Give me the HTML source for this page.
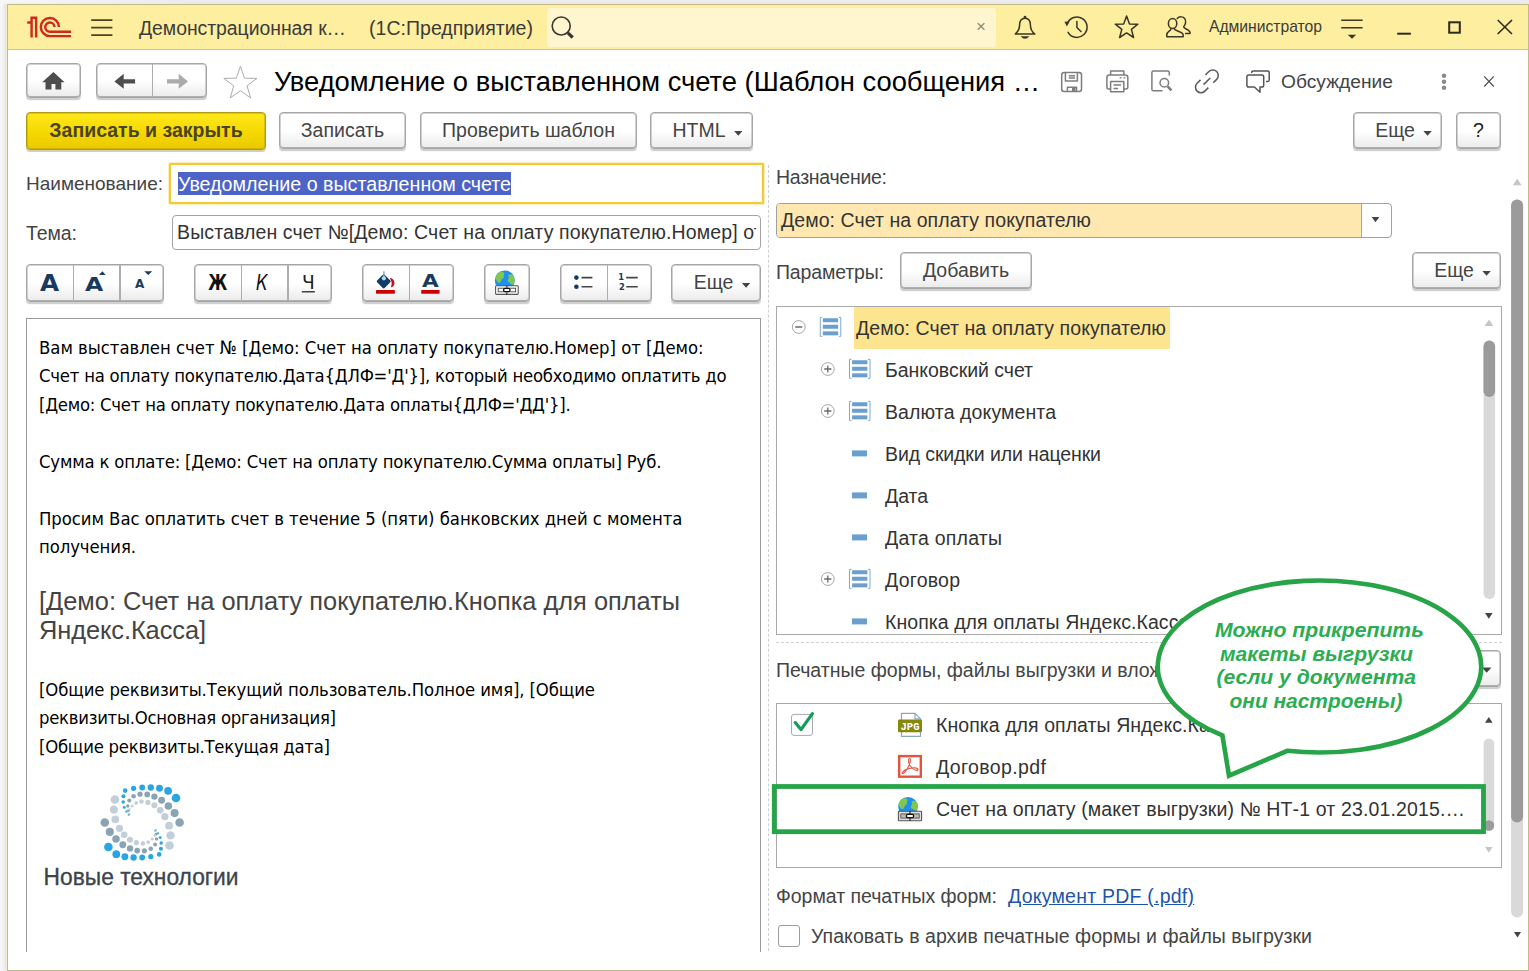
<!DOCTYPE html>
<html lang="ru"><head><meta charset="utf-8"><title>Уведомление о выставленном счете</title>
<style>
*{box-sizing:border-box;margin:0;padding:0}
html,body{width:1529px;height:971px;overflow:hidden;background:#f6f6f6}
body{position:relative;font-family:"Liberation Sans",Arial,sans-serif;font-size:19.5px;color:#3a3a3a}
.abs,.t,.btn,.grp,svg.i{position:absolute}
.t{white-space:nowrap;line-height:24px;height:24px}
#win{position:absolute;left:7px;top:4px;width:1522px;height:967px;background:#fff;border:1px solid #c3b98a;box-shadow:-1px 0 0 #f3edd2,-3px 0 2px rgba(225,223,228,.8)}
#bar{position:absolute;left:8px;top:5px;width:1520px;height:45px;background:#fdeea0;border-bottom:1px solid #d2c37c}
#search{position:absolute;left:547px;top:8px;width:449px;height:39.4px;background:#fff6d0;border-radius:3px}
.btn{border:1px solid #a6a6a6;border-radius:4px;background:linear-gradient(#ffffff 50%,#ebebeb);box-shadow:inset 0 -1px 0 rgba(166,166,166,.75),inset 0 0 0 1px rgba(166,166,166,.5),0 2px 0 #cfcfcf,0 3px 0 rgba(0,0,0,.03);text-align:center;white-space:nowrap;color:#444;line-height:34px;height:37px}
.btn.y{background:linear-gradient(#ffe81c,#f5d800 55%,#ebc900);border:1px solid #b09c12;box-shadow:inset 0 0 0 1px rgba(176,156,18,.45),0 2px 0 #d5d0b0;font-weight:bold;color:#4a4426}
.grp{border:1px solid #a6a6a6;border-radius:4px;background:linear-gradient(#ffffff 50%,#ebebeb);box-shadow:inset 0 -1px 0 rgba(166,166,166,.75),inset 0 0 0 1px rgba(166,166,166,.5),0 2px 0 #cfcfcf,0 3px 0 rgba(0,0,0,.03);height:37px}
.grp i{position:absolute;top:0;width:1.4px;height:35px;background:#adadad}
.dd{display:inline-block;width:8.4px;height:4.8px;background:#444;clip-path:polygon(0 0,100% 0,50% 100%);vertical-align:middle;margin-left:8.5px;position:relative;top:1.5px}
.btn.m{padding-left:12px}
.ed{font-family:"DejaVu Sans Condensed","DejaVu Sans","Liberation Sans",sans-serif;font-size:18.35px;color:#000;line-height:28.5px;height:28.5px}
.big{font-size:25.4px;color:#444;line-height:29px;height:29px}
.tr{font-size:19.5px;color:#333}
</style></head><body>
<div class="abs" style="left:0;top:0;width:1529px;height:4px;background:linear-gradient(90deg,#f7f7f7,#ececec 12%)"></div>
<div id="win"></div>
<div id="bar"></div>
<div id="search"></div>

<!-- title bar texts -->
<div class="t" style="left:139px;top:16px;color:#3b3b3b;font-size:19.4px;letter-spacing:-0.032px">Демонстрационная к…</div>
<div class="t" style="left:369px;top:16px;color:#3b3b3b;font-size:19.5px;letter-spacing:0.032px">(1С:Предприятие)</div>
<div class="t" style="left:1209px;top:15px;color:#3b3b3b;font-size:15.7px;letter-spacing:-0.016px">Администратор</div>
<div class="t" style="left:976px;top:15px;color:#8d8871;font-size:17px">×</div>

<!-- nav row -->
<div class="btn" style="left:26px;top:63px;width:55px;height:35px"></div>
<div class="grp" style="left:96px;top:63px;width:111px;height:35px"><i style="left:55px;height:33px"></i></div>
<div class="t" style="left:274px;top:66.3px;font-size:27.35px;color:#000;line-height:32px;height:32px;letter-spacing:-0.008px">Уведомление о выставленном счете (Шаблон сообщения …</div>
<div class="t" style="left:1281px;top:70px;font-size:19.2px;color:#444;letter-spacing:0.023px">Обсуждение</div>

<!-- command bar -->
<div class="btn y" style="left:26px;top:112px;width:240px;height:38px;line-height:34px">Записать и закрыть</div>
<div class="btn" style="left:279px;top:112px;width:127px">Записать</div>
<div class="btn" style="left:420px;top:112px;width:217px">Проверить шаблон</div>
<div class="btn m" style="left:650px;top:112px;width:103px">HTML<span class="dd"></span></div>
<div class="btn m" style="left:1353px;top:112px;width:89px">Еще<span class="dd"></span></div>
<div class="btn" style="left:1456px;top:112px;width:45px;color:#222">?</div>

<!-- left column fields -->
<div class="t" style="left:26px;top:172px;font-size:19px;color:#444;letter-spacing:0.000px">Наименование:</div>
<div class="abs" style="left:169px;top:163px;width:595px;height:41px;border:2px solid #f2cb3d;border-radius:1.5px;box-shadow:0 0 0 1px #fbeeba;background:#fff"></div>
<div class="abs" style="left:178px;top:172px;width:333px;height:23px;background:#4d64c6"></div>
<div class="t" style="left:178px;top:172px;font-size:19.66px;color:#fff;letter-spacing:-0.001px">Уведомление о выставленном счете</div>
<div class="t" style="left:26px;top:221px;color:#444;letter-spacing:-0.086px">Тема:</div>
<div class="abs" style="left:172px;top:215px;width:589px;height:35px;border:1px solid #a3a3a3;border-radius:4px;background:#fff"></div><div class="abs" style="left:173px;top:216px;width:582.5px;height:33px;overflow:hidden"><div class="t" style="left:4px;top:4.3px;color:#333;letter-spacing:0.120px">Выставлен счет №[Демо: Счет на оплату покупателю.Номер] от [Демо</div></div>

<!-- editor toolbar -->
<div class="grp" style="left:26px;top:264px;width:138px;height:37.7px"><i style="left:45.6px"></i><i style="left:92.2px"></i></div>
<div class="grp" style="left:194px;top:264px;width:138px;height:37.7px"><i style="left:45.6px"></i><i style="left:92.2px"></i></div>
<div class="grp" style="left:362px;top:264px;width:92px;height:37.7px"><i style="left:45.7px"></i></div>
<div class="grp" style="left:484px;top:264px;width:46px;height:37.7px"></div>
<div class="grp" style="left:560px;top:264px;width:92px;height:37.7px"><i style="left:45.8px"></i></div>
<div class="btn m" style="left:671px;top:264px;width:90px;height:37.7px;line-height:35px">Еще<span class="dd"></span></div>

<!-- editor -->
<div class="abs" style="left:26px;top:318px;width:735px;height:634px;border:1px solid #999;border-bottom:none;background:#fff"></div>
<div class="t ed" style="left:39px;top:334px;letter-spacing:-0.015px">Вам выставлен счет № [Демо: Счет на оплату покупателю.Номер] от [Демо:</div>
<div class="t ed" style="left:39px;top:362px;letter-spacing:-0.227px">Счет на оплату покупателю.Дата{ДЛФ='Д'}], который необходимо оплатить до</div>
<div class="t ed" style="left:39px;top:391px;letter-spacing:-0.250px">[Демо: Счет на оплату покупателю.Дата оплаты{ДЛФ='ДД'}].</div>
<div class="t ed" style="left:39px;top:448px;letter-spacing:-0.173px">Сумма к оплате: [Демо: Счет на оплату покупателю.Сумма оплаты] Руб.</div>
<div class="t ed" style="left:39px;top:505px;letter-spacing:-0.052px">Просим Вас оплатить счет в течение 5 (пяти) банковских дней с момента</div>
<div class="t ed" style="left:39px;top:533px;letter-spacing:-0.089px">получения.</div>
<div class="t big" style="left:39px;top:587px;letter-spacing:-0.006px">[Демо: Счет на оплату покупателю.Кнопка для оплаты</div>
<div class="t big" style="left:39px;top:616px;letter-spacing:-0.077px">Яндекс.Касса]</div>
<div class="t ed" style="left:39px;top:676px;letter-spacing:-0.116px">[Общие реквизиты.Текущий пользователь.Полное имя], [Общие</div>
<div class="t ed" style="left:39px;top:704px;letter-spacing:-0.276px">реквизиты.Основная организация]</div>
<div class="t ed" style="left:39px;top:733px;letter-spacing:-0.248px">[Общие реквизиты.Текущая дата]</div>

<div class="abs" style="left:768px;top:165px;width:0;height:786px;border-left:1px dashed #cfcfcf"></div>
<!-- right column -->
<div class="t" style="left:776px;top:165.3px;color:#444;letter-spacing:-0.277px">Назначение:</div>
<div class="abs" style="left:776px;top:203px;width:616px;height:35px;border:1px solid #a0a0a0;border-radius:4px;background:#fff;overflow:hidden"><div class="abs" style="left:0;top:0;width:585px;height:33px;background:#fee8b0;border-right:1px solid #a6a6a6"></div><div class="t" style="left:4px;top:3.5px;color:#333;letter-spacing:0.065px">Демо: Счет на оплату покупателю</div></div>

<div class="t" style="left:776px;top:260px;color:#444;letter-spacing:-0.153px">Параметры:</div>
<div class="btn" style="left:900px;top:252px;width:132px">Добавить</div>
<div class="btn m" style="left:1412px;top:252px;width:89px">Еще<span class="dd"></span></div>

<!-- tree -->
<div class="abs" id="tree" style="left:776px;top:306px;width:726px;height:329px;border:1px solid #a9a9a9;background:#fff;overflow:hidden"></div>
<div class="abs" style="left:854px;top:307px;width:316px;height:42px;background:#fde48e"></div>
<div class="t tr" style="left:856px;top:316px;letter-spacing:0.065px">Демо: Счет на оплату покупателю</div>
<div class="t tr" style="left:885px;top:358px;letter-spacing:-0.032px">Банковский счет</div>
<div class="t tr" style="left:885px;top:400px;letter-spacing:0.101px">Валюта документа</div>
<div class="t tr" style="left:885px;top:442px;letter-spacing:-0.109px">Вид скидки или наценки</div>
<div class="t tr" style="left:885px;top:484px">Дата</div>
<div class="t tr" style="left:885px;top:526px;letter-spacing:0.225px">Дата оплаты</div>
<div class="t tr" style="left:885px;top:568px;letter-spacing:0.227px">Договор</div>
<div class="abs" style="left:885px;top:610px;width:500px;height:24px;overflow:hidden"><div class="t tr" style="left:0;top:0;letter-spacing:.06px">Кнопка для оплаты Яндекс.Касса</div></div>

<div class="abs" style="left:776px;top:642px;width:726px;height:0;border-top:1px dashed #cfcfcf"></div>
<div class="t" style="left:776px;top:658px;color:#444">Печатные формы, файлы выгрузки и вложения</div>
<div class="btn" style="left:1412px;top:650px;width:89px"></div>

<!-- list -->
<div class="abs" style="left:776px;top:703px;width:726px;height:165px;border:1px solid #a9a9a9;background:#fff"></div>
<div class="t tr" style="left:936px;top:713px;letter-spacing:.06px">Кнопка для оплаты Яндекс.Касса.jpg</div>
<div class="t tr" style="left:936px;top:755px;letter-spacing:0.384px">Договор.pdf</div>
<div class="t tr" style="left:936px;top:797px;letter-spacing:0.138px">Счет на оплату (макет выгрузки) № НТ-1 от 23.01.2015.…</div>

<div class="t" style="left:776px;top:884px;color:#444;letter-spacing:-0.023px">Формат печатных форм:</div>
<div class="t" style="left:1008px;top:884px;color:#1d55a8;text-decoration:underline;letter-spacing:0.230px">Документ PDF (.pdf)</div>
<div class="abs" style="left:778px;top:925px;width:22px;height:22px;border:1px solid #9c9c9c;border-radius:3px;background:#fff"></div>
<div class="t" style="left:811px;top:924px;color:#444;letter-spacing:0.057px">Упаковать в архив печатные формы и файлы выгрузки</div>

<!-- icons -->
<svg class="i" style="left:0;top:0" width="1529" height="971" viewBox="0 0 1529 971" fill="none">
 <!-- 1C logo -->
 <g stroke="#cf2a1c" stroke-width="2.45" fill="none">
  <path d="M31.6 37.5 V17.7 H36.15 V37.5 M27.2 22.4 H31.6"/>
  <path d="M58.91 27.06 A9.05 9.05 0 1 0 49.86 36.11 H71.1"/>
  <path d="M54.46 27.06 A4.6 4.6 0 1 0 49.86 31.66 H71.1"/>
 </g>
 <!-- hamburger -->
 <path d="M91.2 20.2 H112.4 M91.2 27.6 H112.4 M91.2 35.2 H112.4" stroke="#4a4220" stroke-width="1.8"/>
 <!-- magnifier -->
 <circle cx="561.2" cy="26" r="9" stroke="#3a3630" stroke-width="1.6"/>
 <path d="M567.9 32.9 L572.7 37.5" stroke="#3a3630" stroke-width="3.2"/>
 <!-- bell -->
 <g stroke="#3a3628" stroke-width="1.5" stroke-linejoin="round" stroke-linecap="round">
  <path d="M1015.2 34.1 C1019 31 1019.6 28.6 1019.6 25 C1019.6 20.4 1021.8 18.2 1025 18.2 C1028.2 18.2 1030.4 20.4 1030.4 25 C1030.4 28.6 1031 31 1034.8 34.1 Z"/>
  <circle cx="1025" cy="17.2" r="0.7"/>
  <path d="M1020.6 36.3 H1029.4 Q1025 41.4 1020.6 36.3 Z" fill="#3a3628" stroke="none"/>
  <!-- history -->
  <path d="M1067.3 23.7 A10.2 10.2 0 1 1 1068.07 32.3"/>
  <path d="M1076.9 21.5 V27.5 L1081 31.5"/>
  <path d="M1064.4 21.8 L1069.6 21.5 L1066.9 26.4 Z" fill="#3a3628" stroke="none"/>
  <!-- star -->
  <polygon points="1126.6,16.0 1129.5,23.9 1137.9,24.2 1131.4,29.4 1133.6,37.5 1126.6,32.9 1119.6,37.5 1121.8,29.4 1115.3,24.2 1123.7,23.9"/>
  <!-- users -->
  <ellipse cx="1172.6" cy="23.6" rx="4.2" ry="5"/>
  <path d="M1171 28.6 C1171 31.5 1166.8 31 1166.8 35 V36.7 H1183.2 V35 C1183.2 31 1174.2 31.5 1174.2 28.6"/>
  <path d="M1177.2 18.4 C1178.2 17.2 1179.8 16.6 1181.4 16.8 C1184.4 17.1 1186 19.6 1185.6 22.6 C1185.3 24.6 1184.5 25.8 1183.6 26.8 C1184.4 29.4 1190 29.4 1190 32.6 V33.6 H1185.6"/>
 </g>
 <!-- filter lines -->
 <path d="M1341.2 20.3 H1362.6 M1341.2 27.8 H1362.6" stroke="#3a3628" stroke-width="1.6"/>
 <path d="M1347.7 34.7 H1356.2 L1352 38.8 Z" fill="#3a3628"/>
 <!-- window controls -->
 <path d="M1397.2 33.7 H1410.9" stroke="#2e2a1c" stroke-width="2"/>
 <rect x="1449.2" y="22.3" width="10.6" height="10.4" stroke="#2e2a1c" stroke-width="2"/>
 <path d="M1497.7 20 L1512 34 M1512 20 L1497.7 34" stroke="#2e2a1c" stroke-width="1.6"/>

 <!-- home / back / forward -->
 <path d="M53.4 72 L64.6 82.2 H61.3 V89.5 H55.4 V83.9 H51.5 V89.5 H45.5 V82.2 H42.2 Z" fill="#4d4d4d"/>
 <path d="M114.4 81.4 L123.7 73.7 V79.3 H135.1 V83.6 H123.7 V88.7 Z" fill="#4d4d4d"/>
 <path d="M188 81.4 L178.7 73.7 V79.3 H167 V83.6 H178.7 V88.7 Z" fill="#ababab"/>
 <polygon points="240.4,66.3 244.5,78.2 257.0,78.4 247.0,85.9 250.7,98.0 240.4,90.7 230.1,98.0 233.8,85.9 223.8,78.4 236.3,78.2" stroke="#adadad" stroke-width="1"/>

 <!-- save -->
 <g stroke="#7d7d7d" stroke-width="1.5" stroke-linejoin="round">
  <rect x="1061.7" y="72.5" width="19.8" height="19" rx="2.5"/>
  <path d="M1065.4 72.5 V81 H1077.4 V72.5 M1068.8 75.7 H1075.1 M1068.8 78.1 H1075.1" />
  <path d="M1067.4 91.5 V87.2 H1076.6 V91.5"/>
  <rect x="1072" y="87.8" width="3.6" height="3.7" fill="#7d7d7d" stroke="none"/>
  <!-- print -->
  <path d="M1110.6 75 V70.9 H1123.8 V75"/>
  <path d="M1110.6 89 H1108.6 Q1106.9 89 1106.9 87 V77.5 Q1106.9 75 1109.4 75 H1125.2 Q1127.8 75 1127.8 77.5 V87 Q1127.8 89 1126 89 H1123.8"/>
  <rect x="1110.6" y="81.4" width="13.2" height="10.3" fill="#fff"/>
  <path d="M1113.5 85.1 H1121 M1113.5 88.4 H1118" />
  <path d="M1119.6 77.9 H1121.6 M1123.4 77.9 H1125.4" stroke-width="1.3"/>
  <!-- preview -->
  <path d="M1169.3 75.5 V72.4 Q1169.3 70.9 1167.6 70.9 H1153.4 Q1151.9 70.9 1151.9 72.4 V89.2 Q1151.9 90.8 1153.4 90.8 H1162.5"/>
 </g>
 <circle cx="1164.3" cy="82.8" r="4.3" stroke="#7d7d7d" stroke-width="1.5"/>
 <path d="M1167.6 86.3 L1171.4 90.4" stroke="#7d7d7d" stroke-width="2.6"/>
 <!-- link -->
 <g stroke="#5c5c5c" stroke-width="1.55" stroke-linecap="butt">
  <path d="M1205.44 74.99 L1208.87 71.56 A5.5 5.5 0 0 1 1216.65 79.34 L1213.22 82.77"/>
  <path d="M1208.32 87.67 L1204.89 91.1 A5.5 5.5 0 0 1 1197.11 83.32 L1200.54 79.89"/>
  <path d="M1203.48 84.66 L1210.31 78"/>
 </g>
 <!-- chat -->
 <g stroke="#555" stroke-width="1.5" stroke-linejoin="round">
  <path d="M1251.6 73 V72.6 Q1251.6 70.9 1253.4 70.9 H1267.4 Q1269.2 70.9 1269.2 72.6 V80 Q1269.2 81.6 1267.4 81.6 H1266"/>
  <path d="M1248.7 75 H1261.9 Q1263.7 75 1263.7 76.8 V85.2 Q1263.7 87 1261.9 87 H1260 V92.2 L1254.4 87 H1248.7 Q1246.9 87 1246.9 85.2 V76.8 Q1246.9 75 1248.7 75 Z"/>
 </g>
 <!-- dots & close -->
 <circle cx="1444" cy="75.7" r="2.3" fill="#8a8a8a"/><circle cx="1444" cy="81.7" r="2.3" fill="#8a8a8a"/><circle cx="1444" cy="87.7" r="2.3" fill="#8a8a8a"/>
 <path d="M1484.2 76.4 L1493.8 86.5 M1493.8 76.4 L1484.2 86.5" stroke="#555" stroke-width="1.3"/>


 <!-- fill bucket -->
 <rect x="-5.3" y="-5.3" width="10.6" height="10.6" rx="1.3" transform="translate(383.7 281.4) rotate(45)" fill="#103d67"/>
 <path d="M383.9 271.2 V277.5" stroke="#8fa4b8" stroke-width="1.5"/>
 <circle cx="383.9" cy="278.3" r="2.1" fill="#b9d8f2"/>
 <path d="M389.9 278.1 C392.3 278.3 394 279.6 394.4 282.2 C394.7 284.6 393.6 286.4 391.7 287.2 C391 287.4 390.9 286.9 391.2 286 C391.9 283.8 391.9 281.8 390.9 280.4 Z" fill="#cc0a12"/>
 <rect x="376" y="290" width="18.9" height="3.7" rx="0.6" fill="#cc0000"/>
 <rect x="421.2" y="290" width="18.4" height="3.7" rx="0.6" fill="#cc0000"/>
 <!-- globe button -->
 <g id="globe">
  <circle cx="504.8" cy="280.4" r="10" fill="#1e90f0"/>
  <path d="M498 273.2 C500.5 271.2 503.5 271.6 504.5 273.4 C503 275.4 505 277 502.6 278.6 C500.6 279.6 501.6 282.4 499.4 283 C497.4 282.6 496 280 495.2 278.6 C495.6 276.4 496.6 274.6 498 273.2 Z" fill="#7ec850"/>
  <path d="M508.6 275 C510.6 273.6 513 274.6 514.2 277 C515 279.4 514.6 282.4 513.2 284.6 C511.2 285 510.6 283 509 282.4 C507 281.4 507.4 279.4 508.6 278.4 C509.6 277.4 507.6 276.2 508.6 275 Z" fill="#7ec850"/>
  <rect x="495.6" y="285.8" width="22.6" height="8.6" rx="0.8" fill="#fff" stroke="#555" stroke-width="1.1"/>
  <rect x="498.2" y="288.2" width="17.4" height="3.6" fill="#fff" stroke="#444" stroke-width="0.9"/>
  <rect x="503.6" y="288.4" width="6.4" height="3.2" rx="1.4" fill="#fff" stroke="#111" stroke-width="1.3"/>
  <path d="M506.8 285.8 V287.6 M506.8 292.4 V294.4" stroke="#222" stroke-width="1.2"/>
 </g>
 <!-- bullets -->
 <circle cx="576.4" cy="277.6" r="2.3" fill="#173a5e"/><circle cx="576.4" cy="286.8" r="2.3" fill="#173a5e"/>
 <path d="M581.5 277.6 H592.4 M581.5 286.8 H592.4 M626.2 277.6 H637.7 M626.2 286.8 H637.7" stroke="#444" stroke-width="1.6"/>
 <!-- size triangles -->
 <path d="M99 274.9 H105.7 L102.35 271.2 Z" fill="#173a5e"/>
 <path d="M144.3 271.2 H152.2 L148.25 274.9 Z" fill="#173a5e"/>
 <!-- Ч underline -->
 <path d="M301.8 291.8 H314.8" stroke="#222" stroke-width="1.3"/>

 <!-- tree expanders -->
 <g stroke="#a6a6a6" stroke-width="1" fill="#fff">
  <circle cx="798.75" cy="327" r="6.4"/><circle cx="827.8" cy="369" r="6.4"/><circle cx="827.8" cy="411" r="6.4"/><circle cx="827.8" cy="579" r="6.4"/>
 </g>
 <path d="M795.2 327 H802.3 M824.2 369 H831.4 M827.8 365.4 V372.6 M824.2 411 H831.4 M827.8 407.4 V414.6 M824.2 579 H831.4 M827.8 575.4 V582.6" stroke="#6a6a6a" stroke-width="1.3"/>
 <!-- tree icons -->
 <defs>
  <g id="rec">
   <path d="M2.5 0.5 H0.5 V19.5 H2.5 M19 0.5 H21 V19.5 H19" stroke="#7fa9d0" stroke-width="1" fill="none"/>
   <rect x="3.1" y="1.4" width="15.3" height="4" fill="#6a9fd0"/><rect x="3.1" y="7.9" width="15.3" height="4" fill="#6a9fd0"/><rect x="3.1" y="14.5" width="15.3" height="4" fill="#6a9fd0"/>
  </g>
  <rect id="fld" width="15" height="6" fill="#6a9fd0"/>
 </defs>
 <use href="#rec" x="819.75" y="316.85"/>
 <use href="#rec" x="849" y="358.85"/><use href="#rec" x="849" y="400.85"/><use href="#rec" x="849" y="568.85"/>
 <use href="#fld" x="852" y="450.4"/><use href="#fld" x="852" y="492.4"/><use href="#fld" x="852" y="534.4"/><use href="#fld" x="852" y="618.4"/>

 <!-- list: checkbox -->
 <rect x="791.5" y="714.4" width="21" height="21" rx="2.5" fill="#fff" stroke="#a9a9a9" stroke-width="1"/>
 <path d="M795.2 722.6 L801 729.6 L812.4 713.6" stroke="#0f9d58" stroke-width="3.2" stroke-linecap="round" stroke-linejoin="round"/>
 <!-- jpg icon -->
 <path d="M901.5 713.3 H915 L920.5 718.8 V736.3 H901.5 Z" fill="#fff" stroke="#8aa5bd" stroke-width="1.2" stroke-linejoin="round"/>
 <path d="M915 713.3 V718.8 H920.5" stroke="#8aa5bd" stroke-width="1.2"/>
 <rect x="898" y="719.5" width="24" height="12.7" rx="1.2" fill="#87870a"/>
 <text x="910" y="730" font-family="Liberation Mono, DejaVu Sans Mono, monospace" font-weight="bold" font-size="10.5" fill="#fff" text-anchor="middle" textLength="19" lengthAdjust="spacingAndGlyphs">JPG</text>
 <!-- pdf icon -->
 <rect x="899.2" y="756.1" width="21.6" height="20.6" fill="#fff" stroke="#e2543e" stroke-width="2.4"/>
 <path d="M902.3 772.8 C903.3 770.6 907.6 768.6 911.8 768 C915.4 767.4 918.4 768.4 918 769.8 C917.6 771 914.6 770.2 912.2 768.2 C909.8 766 908.2 762.4 908.6 759.6 C908.9 758 910.4 758.2 910.4 760 C910.4 763.4 907.4 769.4 904.6 772.4 C903.4 773.8 901.8 774 902.3 772.8 Z" stroke="#e2543e" stroke-width="1.1"/>
 <!-- list globe -->
 <g transform="translate(403.2 526.3)">
  <circle cx="504.8" cy="280.4" r="9.8" fill="#1e90f0"/>
  <path d="M498 273.2 C500.5 271.2 503.5 271.6 504.5 273.4 C503 275.4 505 277 502.6 278.6 C500.6 279.6 501.6 282.4 499.4 283 C497.4 282.6 496 280 495.2 278.6 C495.6 276.4 496.6 274.6 498 273.2 Z" fill="#7ec850"/>
  <path d="M508.6 275 C510.6 273.6 513 274.6 514.2 277 C515 279.4 514.6 282.4 513.2 284.6 C511.2 285 510.6 283 509 282.4 C507 281.4 507.4 279.4 508.6 278.4 C509.6 277.4 507.6 276.2 508.6 275 Z" fill="#7ec850"/>
  <rect x="495.2" y="285" width="23.2" height="9.4" rx="0.8" fill="#ddd" stroke="#555" stroke-width="1.1"/>
  <rect x="497.6" y="287.6" width="18.4" height="4.2" fill="#bbb" stroke="#555" stroke-width="0.9"/>
  <rect x="503.2" y="288" width="7.2" height="3.4" rx="1.4" fill="#fff" stroke="#111" stroke-width="1.3"/>
  <path d="M506.8 285 V287.6 M506.8 292 V294.4" stroke="#222" stroke-width="1.2"/>
 </g>

 <!-- scrollbars -->
 <path d="M1484.6 326 H1493.4 L1489 319.6 Z" fill="#c6c6c6"/>
 <rect x="1483.5" y="340.5" width="11.6" height="258.5" rx="5.8" fill="#d9d9d9"/>
 <rect x="1483.5" y="340.5" width="11.6" height="56.5" rx="5.8" fill="#9b9b9b"/>
 <path d="M1485 613 H1492.6 L1488.8 618.8 Z" fill="#444"/>
 <path d="M1485 722.8 H1492.6 L1488.8 717 Z" fill="#444"/>
 <rect x="1483.6" y="738.5" width="10.6" height="92.4" rx="5.3" fill="#d9d9d9"/>
 <circle cx="1488.9" cy="825.5" r="5.3" fill="#9b9b9b"/>
 <path d="M1485 847 H1492.6 L1488.8 852.8 Z" fill="#c6c6c6"/>
 <path d="M1512.8 185.2 H1521.6 L1517.2 178.8 Z" fill="#c6c6c6"/>
 <rect x="1511.1" y="199.6" width="12" height="718" rx="6" fill="#d9d9d9"/>
 <rect x="1511.1" y="199.6" width="12" height="623" rx="6" fill="#9b9b9b"/>
 <path d="M1514 932 H1521 L1517.5 937.6 Z" fill="#444"/>

 <!-- toolbar glyphs -->
 <g font-family="DejaVu Sans, Liberation Sans, sans-serif" text-anchor="middle">
  <text transform="translate(49.45 290.5) scale(1.065 1)" font-weight="bold" font-size="23.2" fill="#173a5e">A</text>
  <text transform="translate(94.2 290.5) scale(1.19 1)" font-weight="bold" font-size="19.8" fill="#173a5e">A</text>
  <text transform="translate(139.7 287.8)" font-weight="bold" font-size="12" fill="#173a5e">A</text>
  <text transform="translate(217.8 289.8) scale(0.76 1)" font-weight="bold" font-size="20.4" fill="#111">Ж</text>
  <text transform="translate(261.7 289.8) scale(0.8 1)" font-style="italic" font-size="20.4" fill="#111">К</text>
  <text transform="translate(308.3 288.5)" font-size="18.7" fill="#222">Ч</text>
  <text transform="translate(430.45 287.4) scale(1.165 1)" font-weight="bold" font-size="18.5" fill="#173a5e">A</text>
  <text transform="translate(621.2 280.4)" font-weight="bold" font-size="8.3" fill="#173a5e">1</text>
  <text transform="translate(621.8 289.7)" font-weight="bold" font-size="8.3" fill="#173a5e">2</text>
 </g>
 <path d="M1482 667.5 H1491.4 L1486.7 672.8 Z" fill="#444"/>
 <path d="M1371.7 217 H1379.3 L1375.5 222.2 Z" fill="#444"/>
 <text transform="translate(43.6 884.5) scale(0.945 1)" font-family="Liberation Sans, Arial, sans-serif" font-size="24.1" fill="#3d444b" stroke="#3d444b" stroke-width="0.35">Новые технологии</text>
 <!-- logo swirl -->
 <circle cx="176.0" cy="798.0" r="4.32" fill="#2aa5e2"/>
<circle cx="168.1" cy="790.8" r="3.88" fill="#2aa5e2"/>
<circle cx="159.5" cy="788.3" r="3.45" fill="#2aa5e2"/>
<circle cx="150.8" cy="787.5" r="3.17" fill="#2aa5e2"/>
<circle cx="142.2" cy="787.5" r="2.88" fill="#2aa5e2"/>
<circle cx="133.6" cy="788.3" r="2.59" fill="#2aa5e2"/>
<circle cx="125.2" cy="790.6" r="2.30" fill="#2aa5e2"/>
<circle cx="123.5" cy="796.3" r="2.01" fill="#2aa5e2"/>
<circle cx="123.2" cy="802.1" r="1.73" fill="#2aa5e2"/>
<circle cx="124.2" cy="807.4" r="1.44" fill="#2aa5e2"/>
<circle cx="126.4" cy="811.7" r="1.15" fill="#2aa5e2"/>
<circle cx="128.5" cy="815.0" r="0.86" fill="#2aa5e2"/>
<circle cx="179.6" cy="822.5" r="4.32" fill="#8aa4b4"/>
<circle cx="174.6" cy="813.1" r="4.03" fill="#8aa4b4"/>
<circle cx="168.4" cy="806.0" r="3.74" fill="#8aa4b4"/>
<circle cx="161.6" cy="800.2" r="3.45" fill="#8aa4b4"/>
<circle cx="154.4" cy="796.6" r="3.17" fill="#8aa4b4"/>
<circle cx="147.2" cy="794.4" r="2.88" fill="#8aa4b4"/>
<circle cx="140.0" cy="794.2" r="2.59" fill="#8aa4b4"/>
<circle cx="133.6" cy="796.3" r="2.30" fill="#8aa4b4"/>
<circle cx="129.3" cy="800.6" r="2.01" fill="#8aa4b4"/>
<circle cx="127.8" cy="806.0" r="1.73" fill="#8aa4b4"/>
<circle cx="128.4" cy="810.7" r="1.44" fill="#8aa4b4"/>
<circle cx="129.3" cy="814.2" r="1.01" fill="#8aa4b4"/>
<circle cx="169.5" cy="845.5" r="4.32" fill="#c3cfd8"/>
<circle cx="170.5" cy="835.4" r="4.17" fill="#c3cfd8"/>
<circle cx="169.1" cy="825.7" r="3.88" fill="#c3cfd8"/>
<circle cx="164.9" cy="816.7" r="3.60" fill="#c3cfd8"/>
<circle cx="160.2" cy="810.3" r="3.31" fill="#c3cfd8"/>
<circle cx="154.4" cy="805.2" r="3.02" fill="#c3cfd8"/>
<circle cx="148.0" cy="802.4" r="2.59" fill="#c3cfd8"/>
<circle cx="141.5" cy="801.5" r="2.30" fill="#c3cfd8"/>
<circle cx="136.2" cy="802.9" r="1.87" fill="#c3cfd8"/>
<circle cx="132.1" cy="806.0" r="1.58" fill="#c3cfd8"/>
<circle cx="129.5" cy="809.6" r="1.29" fill="#c3cfd8"/>
<circle cx="128.5" cy="813.6" r="0.86" fill="#c3cfd8"/>
<circle cx="108.4" cy="847.0" r="4.32" fill="#2aa5e2"/>
<circle cx="116.3" cy="854.2" r="3.88" fill="#2aa5e2"/>
<circle cx="124.9" cy="856.7" r="3.45" fill="#2aa5e2"/>
<circle cx="133.6" cy="857.5" r="3.17" fill="#2aa5e2"/>
<circle cx="142.2" cy="857.5" r="2.88" fill="#2aa5e2"/>
<circle cx="150.8" cy="856.7" r="2.59" fill="#2aa5e2"/>
<circle cx="159.2" cy="854.4" r="2.30" fill="#2aa5e2"/>
<circle cx="160.9" cy="848.7" r="2.01" fill="#2aa5e2"/>
<circle cx="161.2" cy="842.9" r="1.73" fill="#2aa5e2"/>
<circle cx="160.2" cy="837.6" r="1.44" fill="#2aa5e2"/>
<circle cx="158.0" cy="833.3" r="1.15" fill="#2aa5e2"/>
<circle cx="155.9" cy="830.0" r="0.86" fill="#2aa5e2"/>
<circle cx="104.8" cy="822.5" r="4.32" fill="#8aa4b4"/>
<circle cx="109.8" cy="831.9" r="4.03" fill="#8aa4b4"/>
<circle cx="116.0" cy="839.0" r="3.74" fill="#8aa4b4"/>
<circle cx="122.8" cy="844.8" r="3.45" fill="#8aa4b4"/>
<circle cx="130.0" cy="848.4" r="3.17" fill="#8aa4b4"/>
<circle cx="137.2" cy="850.6" r="2.88" fill="#8aa4b4"/>
<circle cx="144.4" cy="850.8" r="2.59" fill="#8aa4b4"/>
<circle cx="150.8" cy="848.7" r="2.30" fill="#8aa4b4"/>
<circle cx="155.1" cy="844.4" r="2.01" fill="#8aa4b4"/>
<circle cx="156.6" cy="839.0" r="1.73" fill="#8aa4b4"/>
<circle cx="156.0" cy="834.3" r="1.44" fill="#8aa4b4"/>
<circle cx="155.1" cy="830.8" r="1.01" fill="#8aa4b4"/>
<circle cx="114.9" cy="799.5" r="4.32" fill="#c3cfd8"/>
<circle cx="113.9" cy="809.6" r="4.17" fill="#c3cfd8"/>
<circle cx="115.3" cy="819.3" r="3.88" fill="#c3cfd8"/>
<circle cx="119.5" cy="828.3" r="3.60" fill="#c3cfd8"/>
<circle cx="124.2" cy="834.7" r="3.31" fill="#c3cfd8"/>
<circle cx="130.0" cy="839.8" r="3.02" fill="#c3cfd8"/>
<circle cx="136.4" cy="842.6" r="2.59" fill="#c3cfd8"/>
<circle cx="142.9" cy="843.5" r="2.30" fill="#c3cfd8"/>
<circle cx="148.2" cy="842.1" r="1.87" fill="#c3cfd8"/>
<circle cx="152.3" cy="839.0" r="1.58" fill="#c3cfd8"/>
<circle cx="154.9" cy="835.4" r="1.29" fill="#c3cfd8"/>
<circle cx="155.9" cy="831.4" r="0.86" fill="#c3cfd8"/>
</svg>
<!-- green annotation -->
<svg class="i" style="left:0;top:0" width="1529" height="971" viewBox="0 0 1529 971">
 <rect x="774.3" y="786.5" width="709.2" height="45.2" fill="none" stroke="#27a447" stroke-width="4.8"/>
 <path d="M1222.4 735.3 L1229 775.7 L1287.2 750.8 A161.7 86 0 1 0 1222.4 735.3 Z" fill="#fff" stroke="#27a447" stroke-width="4.6" stroke-linejoin="miter"/>
 <g font-family="Liberation Sans, Arial, sans-serif" font-weight="bold" font-style="italic" font-size="19.6" fill="#2cad52" text-anchor="middle">
  <text x="1319.3" y="636.8" textLength="208.8" lengthAdjust="spacingAndGlyphs">Можно прикрепить</text>
  <text x="1316.5" y="661" textLength="193" lengthAdjust="spacingAndGlyphs">макеты выгрузки</text>
  <text x="1316.2" y="684.4" textLength="199.5" lengthAdjust="spacingAndGlyphs">(если у документа</text>
  <text x="1316" y="707.5" textLength="173" lengthAdjust="spacingAndGlyphs">они настроены)</text>
 </g>
</svg>
</body></html>
